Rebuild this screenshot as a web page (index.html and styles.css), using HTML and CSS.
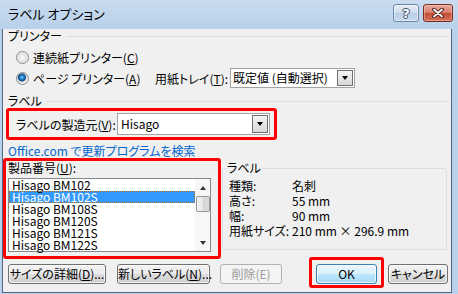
FILE: index.html
```html
<!DOCTYPE html>
<html lang="ja">
<head>
    <meta charset="UTF-8">
    <title>ラベル オプション</title>
    <link rel="stylesheet" href="styles.css">
</head>
<body>
    <div class="window">
        <div class="titlebar">
            <span class="title">ラベル オプション</span>
            <div class="caption-buttons">
                <span class="cap-btn help">?</span>
                <span class="cap-btn close">
                    <svg width="12" height="10" viewBox="0 0 12 10">
                        <path d="M2 1.5 L10 8.5 M10 1.5 L2 8.5" stroke="#3b1510" stroke-width="3.6" stroke-linecap="round"/>
                        <path d="M2 1.5 L10 8.5 M10 1.5 L2 8.5" stroke="#fff" stroke-width="1.8" stroke-linecap="round"/>
                    </svg>
                </span>
            </div>
        </div>

        <div class="client">
            <div class="group-head"><span>プリンター</span><i></i></div>

            <div class="radio-row first">
                <span class="radio"></span>
                <span>連続紙プリンター(<u>C</u>)</span>
            </div>
            <div class="radio-row second">
                <span class="radio checked"></span>
                <span class="radio-text">ページ プリンター(<u>A</u>)</span>
                <span class="tray-label">用紙トレイ(<u>T</u>):</span>
                <div class="combo tray">
                    <span class="combo-text">既定値 (自動選択)</span>
                    <span class="combo-btn"></span>
                </div>
            </div>

            <div class="group-head label-head"><span>ラベル</span><i></i></div>

            <div class="mark vendor">
                <span class="vendor-label">ラベルの製造元(<u>V</u>):</span>
                <div class="combo vendor-combo">
                    <span class="combo-text">Hisago</span>
                    <span class="combo-btn"></span>
                </div>
            </div>

            <div class="link">Office.com で更新プログラムを検索</div>

            <div class="main">
                <div class="mark products">
                    <div class="products-label">製品番号(<u>U</u>):</div>
                    <div class="listbox">
                        <ul class="items">
                            <li>Hisago BM102</li>
                            <li class="selected">Hisago BM102S</li>
                            <li>Hisago BM108S</li>
                            <li>Hisago BM120S</li>
                            <li>Hisago BM121S</li>
                            <li>Hisago BM122S</li>
                        </ul>
                        <div class="scrollbar">
                            <span class="arrow up"></span>
                            <span class="thumb"></span>
                            <span class="arrow down"></span>
                        </div>
                    </div>
                </div>

                <fieldset class="info">
                    <legend>ラベル</legend>
                    <div class="info-rows">
                        <div class="info-row"><span class="key">種類:</span><span>名刺</span></div>
                        <div class="info-row"><span class="key">高さ:</span><span>55 mm</span></div>
                        <div class="info-row"><span class="key">幅:</span><span>90 mm</span></div>
                        <div class="info-row"><span class="key">用紙サイズ:</span><span>210 mm × 296.9 mm</span></div>
                    </div>
                </fieldset>
            </div>

            <div class="buttons">
                <span class="btn details">サイズの詳細(<u>D</u>)...</span>
                <span class="btn new-label">新しいラベル(<u>N</u>)...</span>
                <span class="btn disabled">削除(E)</span>
                <div class="mark ok-mark">
                    <span class="btn default">OK</span>
                </div>
                <span class="btn cancel">キャンセル</span>
            </div>
        </div>
    </div>
</body>
</html>
```

FILE: styles.css
```css
body {
    margin: 0;
    font-family: "Noto Sans CJK JP", sans-serif;
    font-size: 12px;
    font-feature-settings: "palt";
    color: #000;
    white-space: nowrap;
}
u {
    text-decoration: underline;
    text-underline-offset: 1px;
}
.window {
    width: 458px;
    height: 294px;
    background: #b9d1ea;
    overflow: hidden;
}
.titlebar {
    height: 27px;
    display: flex;
    justify-content: space-between;
    align-items: flex-start;
    background: linear-gradient(#c9dcf0, #b9d1ea);
}
.title {
    margin: 6px 0 0 8px;
    line-height: 16px;
    font-size: 13px;
}
.caption-buttons {
    display: flex;
    gap: 4px;
    margin: 4px 5px 0 0;
}
.cap-btn {
    height: 18px;
    box-sizing: border-box;
    border-radius: 3px;
    display: flex;
    align-items: center;
    justify-content: center;
}
.help {
    width: 26px;
    border: 1px solid #6d87a8;
    background: linear-gradient(#e6eef8 0, #cddcec 50%, #b8cce3 50%, #c9daee 100%);
    box-shadow: inset 0 0 0 1px rgba(255, 255, 255, 0.5);
    color: #fff;
    font-family: "DejaVu Sans", sans-serif;
    font-weight: bold;
    font-size: 13px;
    text-shadow: 1px 0 #3d4e63, -1px 0 #3d4e63, 0 1px #3d4e63, 0 -1px #3d4e63;
}
.close {
    width: 30px;
    border: 1px solid #7b2c24;
    background: linear-gradient(#eaaa9c 0, #d67a68 50%, #c34a36 50%, #d4745c 100%);
    box-shadow: inset 0 0 0 1px rgba(255, 220, 210, 0.4);
}

.client {
    width: 450px;
    height: 264px;
    margin-left: 2px;
    box-sizing: border-box;
    background: #f0f0f0;
    border: 1px solid #4f6580;
    border-top: none;
    padding: 0 2px 0 5px;
}

.group-head {
    display: flex;
    align-items: center;
    margin-top: 2px;
    height: 14px;
    line-height: 14px;
}
.group-head i {
    flex: 1;
    border-top: 1px solid #d5dfe5;
    margin-left: 5px;
}
.label-head {
    margin-top: 6px;
}

.radio-row {
    display: flex;
    align-items: center;
}
.radio-row.first {
    margin-top: 5px;
    height: 18px;
}
.radio-row.second {
    margin-top: 2px;
    height: 20px;
}
.radio {
    flex: none;
    width: 13px;
    height: 13px;
    box-sizing: border-box;
    border-radius: 50%;
    border: 1px solid #8a8a8a;
    background: radial-gradient(circle, #fdfdfd 0, #e2e2e2 4px, #f4f4f4 6px);
    margin: 0 4px 0 8px;
}
.radio.checked {
    background: radial-gradient(circle at 45% 40%, #a7e1fb 0, #2b8fd6 1.5px, #104f8f 3.5px, #d6d6d6 4.5px, #f4f4f4 6px);
}
.radio-text {
    width: 122px;
}
.tray-label {
    width: 75px;
}

.combo {
    flex: none;
    display: flex;
    align-items: stretch;
    box-sizing: border-box;
    border: 1px solid #a3a3a3;
    background: #fff;
}
.combo.tray {
    width: 125px;
    height: 20px;
}
.combo-text {
    flex: 1;
    padding-left: 2px;
    line-height: 18px;
}
.combo-btn {
    width: 16px;
    margin: 1px;
    box-sizing: border-box;
    border: 1px solid #707070;
    background: linear-gradient(#f4f4f4, #d8d8d8);
    display: flex;
    align-items: center;
    justify-content: center;
}
.combo-btn::after {
    content: "";
    border-left: 3.5px solid transparent;
    border-right: 3.5px solid transparent;
    border-top: 4px solid #000;
}

.mark {
    box-sizing: border-box;
    border: 3px solid #ff0000;
    border-radius: 3px;
}
.vendor {
    display: flex;
    align-items: center;
    width: 271px;
    height: 32px;
    margin-left: -2px;
    padding: 0 4px 0 7px;
}
.vendor-label {
    width: 101px;
}
.vendor-combo {
    width: 153px;
    height: 22px;
}
.vendor-combo .combo-text {
    padding-left: 3px;
    line-height: 20px;
}

.link {
    margin-top: 4px;
    height: 14px;
    line-height: 14px;
    color: #0066cc;
}

.main {
    display: flex;
    align-items: flex-start;
}
.products {
    width: 218px;
    height: 101px;
    margin-left: -5px;
    padding: 0 7px 0 2px;
}
.products-label {
    line-height: 14px;
    margin-bottom: 3px;
}
.listbox {
    display: flex;
    width: 203px;
    height: 74px;
    box-sizing: border-box;
    border: 1px solid #828790;
    background: #fff;
}
.items {
    flex: 1;
    margin: 0;
    padding: 0;
    list-style: none;
    font-family: "Noto Sans CJK JP", sans-serif;
}
.items li {
    height: 12px;
    line-height: 12px;
    padding-left: 3px;
}
.items li.selected {
    background: #3399ff;
    color: #fff;
    outline: 1px dotted #b86f2a;
    outline-offset: -1px;
}
.scrollbar {
    width: 15px;
    display: flex;
    flex-direction: column;
    align-items: center;
    background: #f7f7f7;
}
.arrow {
    height: 17px;
    width: 15px;
    display: flex;
    align-items: center;
    justify-content: center;
}
.arrow::after {
    content: "";
    border-left: 3px solid transparent;
    border-right: 3px solid transparent;
}
.arrow.up::after {
    border-bottom: 4px solid #333;
}
.arrow.down {
    margin-top: auto;
}
.arrow.down::after {
    border-top: 4px solid #333;
}
.thumb {
    width: 14px;
    height: 16px;
    box-sizing: border-box;
    border: 1px solid #979797;
    border-radius: 2px;
    background: linear-gradient(to right, #f3f3f3, #e4e4e4 50%, #d4d4d4 50%, #dcdcdc);
}

.info {
    width: 225px;
    margin: 3px 0 0 1px;
    padding: 0 0 11px 0;
    box-sizing: border-box;
    border: 1px solid #d5dfe5;
    border-radius: 3px;
    min-width: 0;
}
.info legend {
    margin-left: 3px;
    padding: 0 1px;
    line-height: 14px;
}
.info-rows {
    margin: 3px 0 0 6px;
}
.info-row {
    display: flex;
    height: 15px;
    line-height: 15px;
}
.key {
    width: 63px;
}

.buttons {
    display: flex;
    align-items: flex-start;
    margin-top: 5px;
}
.btn {
    display: block;
    height: 20px;
    box-sizing: border-box;
    border: 1px solid #707070;
    border-radius: 3px;
    background: linear-gradient(#f2f2f2 0, #ebebeb 50%, #dddddd 50%, #cfcfcf 100%);
    box-shadow: inset 0 0 0 1px rgba(255, 255, 255, 0.7);
    line-height: 18px;
    text-align: center;
}
.details {
    width: 98px;
}
.new-label {
    width: 93px;
    margin-left: 11px;
}
.btn.disabled {
    width: 62px;
    margin-left: 10px;
    border-color: #adb2b5;
    background: #f4f4f4;
    box-shadow: none;
    color: #9a9a9a;
}
.ok-mark {
    width: 75px;
    height: 31px;
    margin: -7px 0 0 27px;
    padding: 4px 4px 0 4px;
}
.btn.default {
    border-color: #3c7fb1;
    background: linear-gradient(#eaf6fd 0, #d9f0fc 50%, #bee6fd 50%, #a7d9f5 100%);
}
.cancel {
    width: 60px;
    margin-left: 4px;
}
```
